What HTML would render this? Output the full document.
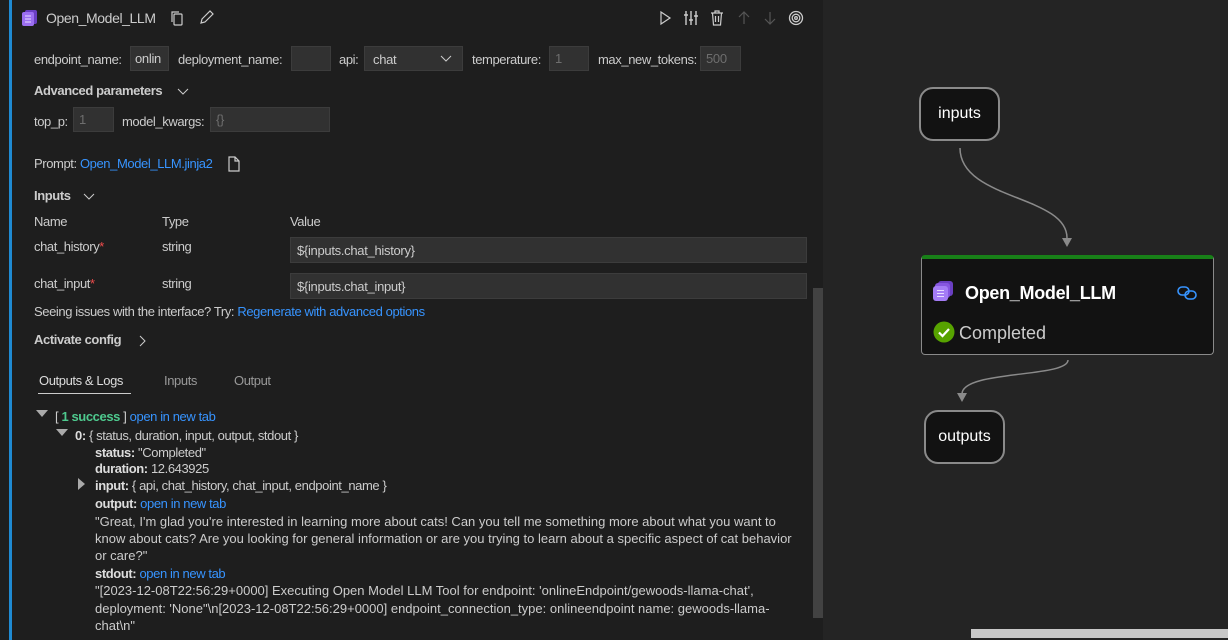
<!DOCTYPE html>
<html><head><meta charset="utf-8"><style>
*{margin:0;padding:0;box-sizing:border-box}
body{width:1228px;height:640px;overflow:hidden;background:#242424;font-family:"Liberation Sans",sans-serif;font-size:13px;color:#cccccc;position:relative}
#left{position:absolute;left:0;top:0;width:823px;height:640px;background:#1e1e1e}
#bar{position:absolute;left:9px;top:0;width:3px;height:640px;background:#1f8ad2}
.a{position:absolute;white-space:nowrap}
.l{letter-spacing:-0.4px}
.in{position:absolute;background:#313131;border:1px solid #3c3c3c;height:25px;color:#ccc;padding:4px 5px;font-size:13px;white-space:nowrap;letter-spacing:-0.3px}
.dim{color:#6e6e6e}
.b{font-weight:bold}
.link{color:#3794ff}
.k{font-weight:bold;color:#ddd}
.node{position:absolute;background:#121212;border:2px solid #8a8a8a;border-radius:14px;color:#fff;font-size:16px;display:flex;align-items:center;justify-content:center}
</style></head><body>
<div id="left">
<div id="bar"></div>
<svg class="a" style="left:21px;top:9px" width="18" height="18" viewBox="0 0 18 18"><rect x="4" y="1" width="12" height="14" rx="2" fill="#6a3fc2"/><rect x="1" y="3" width="12" height="14" rx="2" fill="#9c6ff0"/><g stroke="#e8dcff" stroke-width="1"><line x1="4" y1="7" x2="10" y2="7"/><line x1="4" y1="10" x2="10" y2="10"/><line x1="4" y1="13" x2="10" y2="13"/></g></svg>
<div class="a l" style="left:46px;top:10px;font-size:14px;color:#ccc">Open_Model_LLM</div>
<svg class="a" style="left:169px;top:10px" width="16" height="16" viewBox="0 0 16 16" fill="none" stroke="#ccc" stroke-width="1.2"><rect x="5" y="4" width="8" height="11" rx="1"/><path d="M3 12V2h7"/></svg>
<svg class="a" style="left:198px;top:10px" width="16" height="16" viewBox="0 0 16 16" fill="none" stroke="#ccc" stroke-width="1.2"><path d="M3 13l1-4 8-8 3 3-8 8z"/></svg>
<svg class="a" style="left:657px;top:10px" width="16" height="16" viewBox="0 0 16 16" fill="none" stroke="#ccc" stroke-width="1.2"><path d="M4 2l9 6-9 6z"/></svg>
<svg class="a" style="left:683px;top:10px" width="16" height="16" viewBox="0 0 16 16" fill="none" stroke="#ccc" stroke-width="1.4"><path d="M3 1v14M8 1v14M13 1v14M1 5h4M6 10h4M11 6h4"/></svg>
<svg class="a" style="left:709px;top:10px" width="16" height="16" viewBox="0 0 16 16" fill="none" stroke="#ccc" stroke-width="1.2"><path d="M2 3h12M6 3V1h4v2M3.5 3l1 12h7l1-12M6.5 6v6M9.5 6v6"/></svg>
<svg class="a" style="left:736px;top:10px" width="16" height="16" viewBox="0 0 16 16" fill="none" stroke="#555" stroke-width="1.2"><path d="M8 14V2M3 7l5-5 5 5"/></svg>
<svg class="a" style="left:762px;top:10px" width="16" height="16" viewBox="0 0 16 16" fill="none" stroke="#555" stroke-width="1.2"><path d="M8 2v12M3 9l5 5 5-5"/></svg>
<svg class="a" style="left:788px;top:10px" width="16" height="16" viewBox="0 0 16 16" fill="none" stroke="#ccc" stroke-width="1.3"><circle cx="8" cy="8" r="6.5"/><circle cx="8" cy="8" r="3.8"/><circle cx="8" cy="8" r="1.3"/></svg>
<div class="a l" style="left:34px;top:52px">endpoint_name:</div>
<div class="in" style="left:130px;top:46px;width:39px;padding:4px 4px">onlin</div>
<div class="a l" style="left:178px;top:52px">deployment_name:</div>
<div class="in" style="left:291px;top:46px;width:40px"></div>
<div class="a l" style="left:339px;top:52px">api:</div>
<div class="in" style="left:364px;top:46px;width:99px;padding:5px 8px">chat</div>
<svg class="a" style="left:440px;top:54px" width="12" height="10" viewBox="0 0 12 10" fill="none" stroke="#ccc" stroke-width="1"><path d="M1 2l5 5 5-5"/></svg>
<div class="a l" style="left:472px;top:52px">temperature:</div>
<div class="in dim" style="left:549px;top:46px;width:40px">1</div>
<div class="a l" style="left:598px;top:52px">max_new_tokens:</div>
<div class="in dim" style="left:700px;top:46px;width:41px">500</div>
<div class="a b l" style="left:34px;top:83px">Advanced parameters</div>
<svg class="a" style="left:177px;top:87px" width="12" height="10" viewBox="0 0 12 10" fill="none" stroke="#ccc" stroke-width="1"><path d="M1 2l5 5 5-5"/></svg>
<div class="a l" style="left:34px;top:114px">top_p:</div>
<div class="in dim" style="left:73px;top:107px;width:41px">1</div>
<div class="a l" style="left:122px;top:114px">model_kwargs:</div>
<div class="in dim" style="left:210px;top:107px;width:120px">{}</div>
<div class="a l" style="left:34px;top:156px">Prompt: <span class="link">Open_Model_LLM.jinja2</span></div>
<svg class="a" style="left:227px;top:156px" width="14" height="16" viewBox="0 0 14 16" fill="none" stroke="#ccc" stroke-width="1.2"><path d="M2 1h6l4 4v10H2z M8 1v4h4"/></svg>
<div class="a b l" style="left:34px;top:188px">Inputs</div>
<svg class="a" style="left:83px;top:192px" width="12" height="10" viewBox="0 0 12 10" fill="none" stroke="#ccc" stroke-width="1"><path d="M1 2l5 5 5-5"/></svg>
<div class="a l" style="left:34px;top:214px">Name</div>
<div class="a l" style="left:162px;top:214px">Type</div>
<div class="a l" style="left:290px;top:214px">Value</div>
<div class="a l" style="left:34px;top:239px">chat_history<span style="color:#f14c4c">*</span></div>
<div class="a l" style="left:162px;top:239px">string</div>
<div class="in" style="left:290px;top:237px;width:517px;height:26px;padding:5px 6px">${inputs.chat_history}</div>
<div class="a l" style="left:34px;top:276px">chat_input<span style="color:#f14c4c">*</span></div>
<div class="a l" style="left:162px;top:276px">string</div>
<div class="in" style="left:290px;top:273px;width:517px;height:26px;padding:5px 6px">${inputs.chat_input}</div>
<div class="a l" style="left:34px;top:304px">Seeing issues with the interface? Try: <span class="link">Regenerate with advanced options</span></div>
<div class="a b l" style="left:34px;top:332px">Activate config</div>
<svg class="a" style="left:137px;top:335px" width="10" height="12" viewBox="0 0 10 12" fill="none" stroke="#ccc" stroke-width="1"><path d="M3 1l5 5-5 5"/></svg>
<div class="a l" style="left:39px;top:373px;color:#ddd">Outputs &amp; Logs</div>
<div class="a" style="left:38px;top:393px;width:93px;height:1px;background:#ccc"></div>
<div class="a l" style="left:164px;top:373px;color:#999">Inputs</div>
<div class="a l" style="left:234px;top:373px;color:#999">Output</div>
<div class="a" style="left:36px;top:410px;width:0;height:0;border-left:6px solid transparent;border-right:6px solid transparent;border-top:7px solid #aaa"></div>
<div class="a l" style="left:55px;top:409px">[ <span class="b" style="color:#4ec98e">1 success</span> ] <span class="link">open in new tab</span></div>
<div class="a" style="left:56px;top:429px;width:0;height:0;border-left:6px solid transparent;border-right:6px solid transparent;border-top:7px solid #aaa"></div>
<div class="a l" style="left:75px;top:428px"><span class="k">0:</span> { status, duration, input, output, stdout }</div>
<div class="a l" style="left:95px;top:445px"><span class="k">status:</span> "Completed"</div>
<div class="a l" style="left:95px;top:461px"><span class="k">duration:</span> 12.643925</div>
<div class="a" style="left:78px;top:478px;width:0;height:0;border-top:6px solid transparent;border-bottom:6px solid transparent;border-left:7px solid #aaa"></div>
<div class="a l" style="left:95px;top:478px"><span class="k">input:</span> { api, chat_history, chat_input, endpoint_name }</div>
<div class="a l" style="left:95px;top:496px"><span class="k">output:</span> <span class="link">open in new tab</span></div>
<div class="a" style="left:95px;top:514px">"Great, I'm glad you're interested in learning more about cats! Can you tell me something more about what you want to</div>
<div class="a" style="left:95px;top:531px">know about cats? Are you looking for general information or are you trying to learn about a specific aspect of cat behavior</div>
<div class="a" style="left:95px;top:548px">or care?"</div>
<div class="a l" style="left:95px;top:566px"><span class="k">stdout:</span> <span class="link">open in new tab</span></div>
<div class="a" style="left:95px;top:583px">"[2023-12-08T22:56:29+0000] Executing Open Model LLM Tool for endpoint: 'onlineEndpoint/gewoods-llama-chat',</div>
<div class="a" style="left:95px;top:601px">deployment: 'None"\n[2023-12-08T22:56:29+0000] endpoint_connection_type: onlineendpoint name: gewoods-llama-</div>
<div class="a" style="left:95px;top:618px">chat\n"</div>
<div class="a" style="left:813px;top:288px;width:10px;height:330px;background:#424242"></div>
</div>
<svg class="a" style="left:0;top:0" width="1228" height="640">
<path d="M960 148 C960 200 1067 195 1067 238" fill="none" stroke="#8a8a8a" stroke-width="1.5"/>
<path d="M1062 238h10l-5 9z" fill="#8a8a8a"/>
<path d="M1068 360 C1068 378 962 370 962 394" fill="none" stroke="#8a8a8a" stroke-width="1.5"/>
<path d="M957 393h10l-5 9z" fill="#8a8a8a"/>
</svg>
<div class="node" style="left:919px;top:87px;width:81px;height:54px">inputs</div>
<div class="node" style="left:924px;top:410px;width:81px;height:54px">outputs</div>
<div class="a" style="left:921px;top:255px;width:293px;height:100px;background:#121212;border:1px solid #8a8a8a;border-top:4px solid #188018;border-radius:4px"></div>
<svg class="a" style="left:932px;top:280px" width="22" height="22" viewBox="0 0 22 22"><rect x="6" y="1" width="15" height="15" rx="3" fill="#6a3fc2"/><rect x="3" y="3" width="15" height="15" rx="3" fill="#8656e0"/><rect x="1" y="6" width="15" height="15" rx="3" fill="#a47cf5"/><g stroke="#e8dcff" stroke-width="1"><line x1="5" y1="10.5" x2="12" y2="10.5"/><line x1="5" y1="13.5" x2="12" y2="13.5"/><line x1="5" y1="16.5" x2="12" y2="16.5"/></g></svg>
<div class="a" style="left:965px;top:283px;font-size:18px;font-weight:bold;color:#fff;letter-spacing:-0.3px">Open_Model_LLM</div>
<svg class="a" style="left:1177px;top:285px" width="20" height="16" viewBox="0 0 20 16" fill="none" stroke="#3794ff" stroke-width="1.6"><rect x="1" y="2" width="11" height="8" rx="4"/><rect x="8" y="6" width="11" height="8" rx="4"/></svg>
<svg class="a" style="left:933px;top:321px" width="22" height="22" viewBox="0 0 22 22"><circle cx="11" cy="11" r="10.5" fill="#57a300"/><path d="M6 11.5l3.5 3.5 6.5-7" fill="none" stroke="#fff" stroke-width="2.2"/></svg>
<div class="a" style="left:959px;top:323px;font-size:18px;color:#ccc">Completed</div>
<div class="a" style="left:971px;top:629px;width:257px;height:9px;background:#c8c8c8"></div>
</body></html>
